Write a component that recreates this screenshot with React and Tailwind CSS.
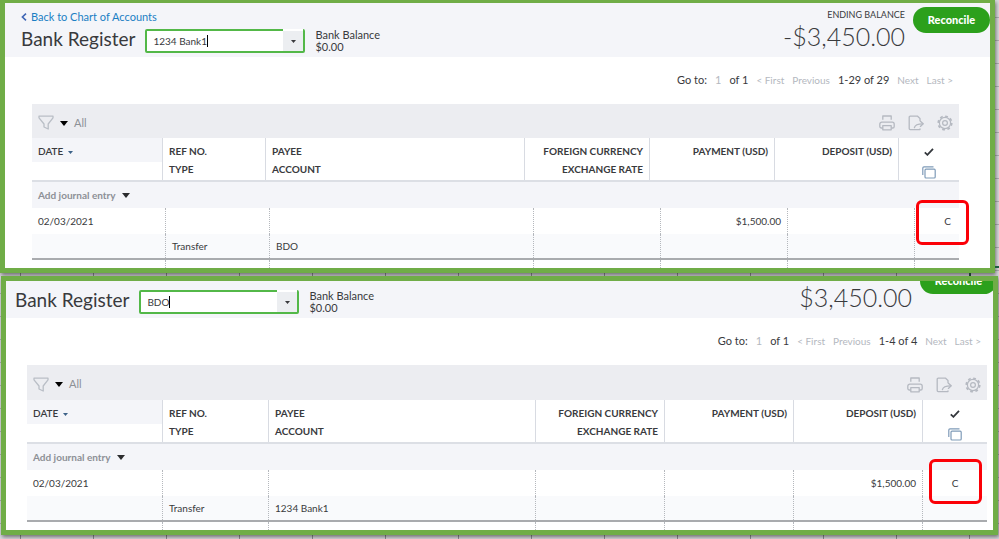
import { useState } from "react";
import clsx from "clsx";

const FilterIcon = () => (
  <svg width="16" height="16" viewBox="0 0 16 16" fill="none" stroke="#b9bec6" strokeWidth="1.3" strokeLinejoin="round">
    <path d="M1 1.2h14v1.6L10.2 9v5l-4.2-2V9L1 2.8z" />
  </svg>
);

const PrinterIcon = () => (
  <svg width="16" height="16" viewBox="0 0 16 16" fill="none" stroke="#b5b9c1" strokeWidth="1.3" strokeLinejoin="round">
    <path d="M3.8 4.8V1h8.4v3.8" />
    <path d="M3.6 13H2.4A1.6 1.6 0 0 1 .8 11.4V9.2a2 2 0 0 1 2-2h10.4a2 2 0 0 1 2 2v2.2a1.6 1.6 0 0 1-1.6 1.6h-1.2" />
    <path d="M3.8 10.6h8.4v4.2H3.8z" />
  </svg>
);

const ExportIcon = () => (
  <svg width="16" height="16" viewBox="0 0 16 16" fill="none" stroke="#b5b9c1" strokeWidth="1.3" strokeLinejoin="round" strokeLinecap="round">
    <path d="M12 5.6V3.4L9.6 1.2H2.2a1 1 0 0 0-1 1v11.4a1 1 0 0 0 1 1h9.8v-.8" />
    <path d="M6.4 12.6c.6-2.8 3-3.8 8.4-3.8" />
    <path d="M12.4 6.2l2.8 2.6-2.8 2.6" />
  </svg>
);

const GearIcon = () => (
  <svg width="16" height="16" viewBox="0 0 16 16" fill="none" stroke="#b5b9c1">
    <circle cx="8" cy="8" r="5.6" strokeWidth="1.2" />
    <circle cx="8" cy="8" r="6.8" strokeWidth="1.6" strokeDasharray="2.8 2.54" />
    <circle cx="8" cy="8" r="2.4" strokeWidth="1.2" />
  </svg>
);

const CopyIcon = () => (
  <svg width="14" height="13" viewBox="0 0 14 13" fill="none" stroke="#7f9bb8" strokeWidth="1.2">
    <path d="M0.8 9V2a1.2 1.2 0 0 1 1.2-1.2h9.5" />
    <rect x="3" y="3.2" width="10.2" height="8.8" rx="1" />
  </svg>
);

const CheckIcon = () => (
  <svg width="10" height="8" viewBox="0 0 10 8" fill="none" stroke="#33373c" strokeWidth="1.8">
    <path d="M0.8 4.4l2.6 2.4L9 0.8" />
  </svg>
);

const Caret = ({ className }) => (
  <svg className={className} viewBox="0 0 8 5" preserveAspectRatio="none" fill="currentColor">
    <path d="M0 0h8L4 5z" />
  </svg>
);

const AccountPicker = ({ initial }) => {
  const [account, setAccount] = useState(initial);
  return (
    <div className="flex h-6 w-40 items-center rounded-xs border-2 border-[#53b848] bg-white">
      <div className="flex min-w-0 flex-1 items-center pl-1.5">
        <input
          aria-label="Account"
          value={account}
          onChange={(e) => setAccount(e.target.value)}
          className="[field-sizing:content] bg-transparent text-[10px] outline-none"
        />
        <span className="h-3 w-px bg-black" />
      </div>
      <button aria-label="Show accounts" className="-mt-0.5 flex w-5 items-center justify-center self-stretch border-t-2 border-white bg-[#eceef1]">
        <Caret className="h-[3px] w-[5px]" />
      </button>
    </div>
  );
};

const RegisterHeader = ({ register }) => (
  <header className={clsx("flex items-end overflow-hidden bg-[#f4f5f9] pb-1", register.headerClass)}>
    <div>
      {register.showLabels && (
        <a href="#accounts" className="flex items-center gap-1 text-[11px] leading-3 text-[#1a7fc4]">
          <svg width="6" height="8" viewBox="0 0 6 8" fill="none" stroke="#3f66b5" strokeWidth="1.6">
            <path d="M5 0.6L1.4 4 5 7.4" />
          </svg>
          Back to Chart of Accounts
        </a>
      )}
      <div className="mt-1.5 flex gap-2.5">
        <h1 className="text-[19px] leading-5">Bank Register</h1>
        <AccountPicker initial={register.account} />
        <p className="text-[11px] leading-3">
          Bank Balance
          <br />
          $0.00
        </p>
      </div>
    </div>
    <div className="ml-auto text-right">
      {register.showLabels && <p className="text-[9px] leading-3">ENDING BALANCE</p>}
      <p className="pb-0.5 text-[25px] leading-[30px] font-light">{register.balance}</p>
    </div>
    <button className={clsx("mb-5 ml-2 h-[26px] w-[77px] shrink-0 rounded-full bg-[#2ca01c] text-[11px] font-black text-white", register.buttonClass)}>
      Reconcile
    </button>
  </header>
);

const Pager = ({ id, range }) => (
  <nav className="flex h-[47px] items-center justify-end gap-2 pr-1.5 text-[10px] text-[#b4b8c0]">
    <label htmlFor={`${id}-page`} className="text-[11px] text-[#393a3d]">Go to:</label>
    <input id={`${id}-page`} defaultValue="1" className="[field-sizing:content] bg-transparent text-[11px] outline-none" />
    <span className="text-[11px] text-[#393a3d]">of 1</span>
    <button>&lt; First</button>
    <button>Previous</button>
    <span className="text-[11px] text-[#393a3d]">{range}</span>
    <button>Next</button>
    <button>Last &gt;</button>
  </nav>
);

const headCell = "border-l border-[#d8dbe2] px-1.5 pt-1 text-[10px] leading-[18px] font-bold";
const bodyCell = "flex items-center border-l border-dotted border-[#b5b8bd] px-1.5 text-[10px]";

const RegisterTable = ({ register }) => (
  <table className="block w-full">
    <thead className="block">
      <tr className={clsx("grid h-11 border-b-2 border-[#dcdfe5]", register.headCols)}>
        <th className="h-6 bg-[#f4f5f9] px-1.5 pt-1 text-left text-[10px] leading-[18px] font-semibold">
          DATE <Caret className="ml-0.5 inline h-[3px] w-[5px] text-[#3c6288]" />
        </th>
        <th className={clsx(headCell, "text-left")}>REF NO.<br />TYPE</th>
        <th className={clsx(headCell, "text-left")}>PAYEE<br />ACCOUNT</th>
        <th className={clsx(headCell, "text-right")}>FOREIGN CURRENCY<br />EXCHANGE RATE</th>
        <th className={clsx(headCell, "text-right")}>PAYMENT (USD)</th>
        <th className={clsx(headCell, "text-right")}>DEPOSIT (USD)</th>
        <th className="flex flex-col items-center gap-2.5 border-l border-[#d8dbe2] pt-2.5">
          <CheckIcon />
          <CopyIcon />
        </th>
      </tr>
    </thead>
    <tbody className="block">
      <tr className="block">
        <td className="flex h-[26px] items-center bg-[#f4f5f9] px-1.5">
          <button className="flex items-center gap-1.5 text-[10px] font-bold text-[#8d9096]">
            Add journal entry <Caret className="h-[5px] w-2 text-[#2b2c2e]" />
          </button>
        </td>
      </tr>
      <tr className={clsx("grid h-[26px]", register.bodyCols)}>
        <td className="flex items-center px-1.5 text-[10px]">02/03/2021</td>
        <td className={bodyCell}></td>
        <td className={bodyCell}></td>
        <td className={bodyCell}></td>
        <td className={clsx(bodyCell, "justify-end")}>{register.payment}</td>
        <td className={clsx(bodyCell, "justify-end")}>{register.deposit}</td>
        <td className={clsx(bodyCell, "relative", register.statusClass)}>
          C
          <span className={clsx("absolute h-[45px] w-[53px] rounded-md border-3 border-[#fb0007]", register.markClass)} />
        </td>
      </tr>
      <tr className={clsx("grid h-[26px] border-b-2 border-[#a9abae] bg-[#f9fafc]", register.bodyCols)}>
        <td></td>
        <td className={bodyCell}>Transfer</td>
        <td className={bodyCell}>{register.transferAccount}</td>
        <td className={bodyCell}></td>
        <td className={bodyCell}></td>
        <td className={bodyCell}></td>
        <td className={bodyCell}></td>
      </tr>
      <tr className={clsx("grid h-2", register.bodyCols)}>
        <td></td>
        <td className={bodyCell}></td>
        <td className={bodyCell}></td>
        <td className={bodyCell}></td>
        <td className={bodyCell}></td>
        <td className={bodyCell}></td>
        <td className={bodyCell}></td>
      </tr>
    </tbody>
  </table>
);

const Register = ({ register }) => (
  <section className={clsx("border-5 border-[#70ad47] bg-white shadow-[1px_2px_4px_rgba(0,0,0,0.5)]", register.panelClass)}>
    <RegisterHeader register={register} />
    <div className={register.contentClass}>
      <Pager id={register.id} range={register.range} />
      <div className={clsx("flex items-center bg-[#ecedf1] px-1.5 pt-1 text-[11px] text-[#8d9096]", register.toolbarClass)}>
        <button className="flex items-center gap-1.5" aria-label="Filter">
          <FilterIcon />
          <Caret className="h-[5px] w-2 text-black" />
          <span>All</span>
        </button>
        <div className="ml-auto flex gap-[13px]">
          <button aria-label="Print"><PrinterIcon /></button>
          <button aria-label="Export"><ExportIcon /></button>
          <button aria-label="Settings"><GearIcon /></button>
        </div>
      </div>
      <RegisterTable register={register} />
    </div>
  </section>
);

const bank1 = {
  id: "bank1",
  account: "1234 Bank1",
  balance: "-$3,450.00",
  showLabels: true,
  range: "1-29 of 29",
  payment: "$1,500.00",
  transferAccount: "BDO",
  panelClass: "mr-1 border-t-3",
  headerClass: "h-[54px] pl-4",
  buttonClass: "",
  contentClass: "pr-[31px] pl-[27px]",
  toolbarClass: "h-[34px]",
  headCols: "grid-cols-[130px_103px_minmax(0,1fr)_125px_125px_124px_61px]",
  bodyCols: "grid-cols-[133px_104px_minmax(0,1fr)_127px_127px_127px_45px]",
  statusClass: "justify-end pr-2",
  markClass: "-top-2 left-px",
};

const bdo = {
  id: "bdo",
  account: "BDO",
  balance: "$3,450.00",
  range: "1-4 of 4",
  deposit: "$1,500.00",
  transferAccount: "1234 Bank1",
  panelClass: "mx-px",
  headerClass: "h-[37px] pl-[9px]",
  buttonClass: "-mr-1",
  contentClass: "pr-1.5 pl-[21px]",
  toolbarClass: "h-[35px]",
  headCols: "grid-cols-[135px_106px_minmax(0,1fr)_129px_129px_129px_65px]",
  bodyCols: "grid-cols-[135px_106px_minmax(0,1fr)_129px_129px_129px_65px]",
  statusClass: "justify-center",
  markClass: "-top-[11px] left-1.5",
};

const App = () => {
  return (
    <main className="min-h-screen overflow-hidden bg-[#dcdbe0] bg-[linear-gradient(to_right,#8f8f94_1px,transparent_1px),linear-gradient(to_bottom,#b0b0b4_1px,transparent_1px)] bg-size-[73px_23px] bg-position-[20px_17px] font-[Lato,sans-serif] text-[#393a3d]">
      <Register register={bank1} />
      {/* edges of the selected sheet cell behind the panels */}
      <div className="relative h-[3px]">
        <span className="absolute right-0 bottom-2 h-0.5 w-1 bg-[#1e5c3f]" />
        <span className="absolute right-7 h-[3px] w-0.5 bg-[#1e3c30]" />
      </div>
      <Register register={bdo} />
    </main>
  );
};

export default App;
